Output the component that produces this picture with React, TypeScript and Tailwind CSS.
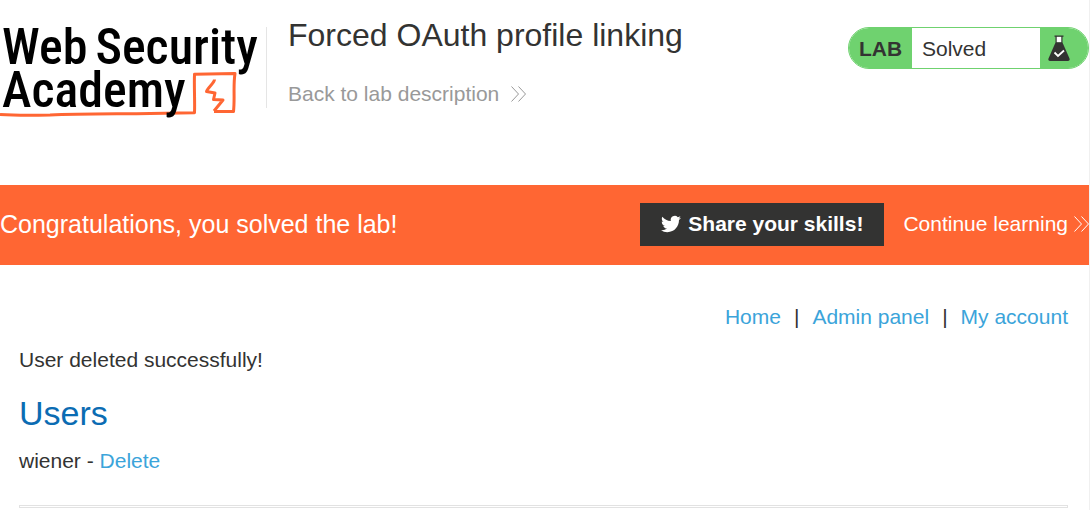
function Chevrons({ className }: { className: string }) {
  return (
    <svg className={className} viewBox="0 0 15 16" fill="none" stroke="currentColor" strokeWidth="1" aria-hidden="true">
      <path d="M.5 .5 7.500 8 .5 15.500M7.500 .5 14.500 8 7.500 15.500" />
    </svg>
  );
}

function Logo() {
  return (
    <a href="#home" className="relative block h-[96px] w-[266px] shrink-0 text-black" aria-label="Web Security Academy">
      <svg className="absolute inset-0 h-full w-full" viewBox="0 0 266 96" fill="none" stroke="#ff6633" strokeLinejoin="round" aria-hidden="true">
        <path d="M0 90.500C15 91.500 30 91.500 50 91C80 89.500 120 90 150 89.500L194.500 88.800C195 76 194 64 194.500 50.200L235 49.500C233 62 235 74 233.500 87.500L214 87.500" strokeWidth="3" />
        <path d="M214.500 55.500C214.500 59 208 63 206.500 67.500L215 69 213.500 75.500 223 76 214 87" strokeWidth="3" />
      </svg>
      <span className="relative flex flex-col pl-[2px] pt-[2px] font-['Roboto_Condensed','Roboto',sans-serif] text-[50px] font-medium leading-[43px]">
        <span className="flex gap-2 whitespace-nowrap">
          <span>Web</span>
          <span>Security</span>
        </span>
        <span>Academy</span>
      </span>
    </a>
  );
}

function LabStatus() {
  return (
    <div className="mt-[3px] flex h-[42px] w-[241px] overflow-hidden rounded-full border border-[#6fd26f] text-[21px] leading-[42px]">
      <span className="w-[63px] bg-[#6fd26f] pl-[10px] font-bold">LAB</span>
      <span className="grow bg-white pl-[10px]">Solved</span>
      <span className="flex w-12 items-center bg-[#6fd26f] pl-2">
        <svg className="h-[26px] w-[22px]" viewBox="0 0 22 26" aria-hidden="true">
          <path d="M8 1.500h6v6H8z" fill="#fff" />
          <path d="M6.500.5h9v1.200h-1v5.800L21.500 23.500Q22.300 26 20 26H2Q-.3 26 .5 23.500L7.500 7.500V1.700h-1zM8.700 1.700v5.500h4.600v-5.500z" fill="#333332" />
          <path d="m6.500 17.500 3.500 3.500 6-5.500" fill="none" stroke="#fff" strokeWidth="1.800" />
        </svg>
      </span>
    </div>
  );
}

export default function App() {
  return (
    <div className="min-h-screen overflow-hidden border-r border-[#f0f0f0] bg-white font-['Liberation_Sans',Arial,sans-serif] text-[21px] leading-[26px] text-[#333332]">
      <header className="flex h-[185px] items-start pt-6">
        <Logo />
        <div className="mt-[3px] h-[81px] w-px bg-[#e5e5e5]" />
        <div className="grow pl-[21px]">
          <h1 className="text-[32px] leading-[22px]">Forced OAuth profile linking</h1>
          <a href="#lab" className="mt-[35px] flex items-center gap-3 text-[#999]">
            Back to lab description
            <Chevrons className="h-4 w-[15px]" />
          </a>
        </div>
        <LabStatus />
      </header>

      <section className="flex h-20 items-center bg-[#ff6633] pb-[2px] text-white">
        <p className="grow text-[25px]">Congratulations, you solved the lab!</p>
        <button type="button" className="flex h-[43px] items-center gap-[7px] bg-[#333332] px-[21px] font-bold">
          <svg className="h-5 w-5" viewBox="0 0 24 24" fill="currentColor" aria-hidden="true">
            <path d="M23.950 4.570a10 10 0 0 1-2.820.775 4.960 4.960 0 0 0 2.160-2.723c-.95.555-2.005.959-3.127 1.184a4.920 4.920 0 0 0-8.384 4.482C7.690 8.095 4.067 6.130 1.640 3.162a4.820 4.820 0 0 0-.666 2.475c0 1.710.87 3.213 2.188 4.096a4.900 4.900 0 0 1-2.228-.616v.06a4.920 4.920 0 0 0 3.946 4.827 5 5 0 0 1-2.212.085 4.940 4.940 0 0 0 4.604 3.417 9.870 9.870 0 0 1-6.102 2.105q-.585 0-1.170-.067a14 14 0 0 0 7.557 2.209c9.053 0 13.998-7.496 13.998-13.985q0-.315-.015-.63A9.940 9.940 0 0 0 24 4.590z" />
          </svg>
          Share your skills!
        </button>
        <a href="#learn" className="flex items-center gap-[6px] pl-[19px]">
          Continue learning
          <Chevrons className="h-4 w-[15px]" />
        </a>
      </section>

      <main className="pl-[19px] pr-[21px] pt-[39px]">
        <nav className="flex justify-end gap-[13px] text-[#3ba4da]">
          <a href="#home">Home</a>
          <span className="text-[#333332]">|</span>
          <a href="#admin">Admin panel</a>
          <span className="text-[#333332]">|</span>
          <a href="#account">My account</a>
        </nav>
        <p className="mt-[17px]">User deleted successfully!</p>
        <h2 className="mt-5 text-[34px] leading-[40px] text-[#0b6cb3]">Users</h2>
        <p className="mt-[15px]">
          wiener - <a href="#delete" className="text-[#3ba4da]">Delete</a>
        </p>
        <hr className="mt-[31px] h-[3px] border border-[#e2e2e2]" />
      </main>
    </div>
  );
}
